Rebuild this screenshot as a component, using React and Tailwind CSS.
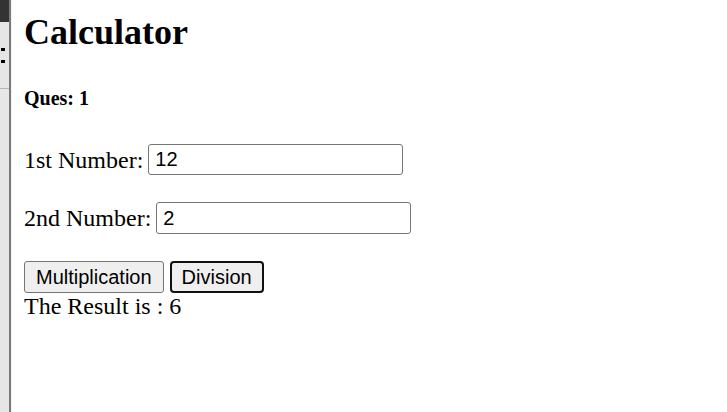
import { useState } from 'react'

const serif = { fontFamily: '"Liberation Serif", "Times New Roman", serif' }

export default function App() {
  const [a, setA] = useState('12')
  const [b, setB] = useState('2')
  const [result, setResult] = useState(6)

  return (
    <div className="flex min-h-[412px] w-[727px] bg-white text-black" style={serif}>

      {/* ── Bord gauche (fenêtre voisine) ─────────────── */}
      <div className="relative flex w-[12px] shrink-0 bg-[#e6e6e6]">
        <div className="absolute left-0 top-0 h-[22px] w-[9px] bg-[#333333]" />
        <div className="absolute left-[1px] top-[48px] h-[3px] w-[4px] bg-black" />
        <div className="absolute left-[1px] top-[60px] h-[3px] w-[4px] bg-black" />
        <div className="absolute left-0 top-[88px] h-px w-[9px] bg-[#b5b5b5]" />
        <div className="ml-[9px] w-[2px] bg-[#7a7a7a]" />
        <div className="w-px bg-[#f3f3f3]" />
      </div>

      {/* ── Contenu ──────────────────────────────────── */}
      <div className="flex flex-col pl-[12px]">
        <h2 className="mt-[12px] text-[36px] font-bold leading-[41px]">Calculator</h2>

        <h5 className="mt-[34px] text-[20px] font-bold leading-[23px]">Ques: 1</h5>

        <div className="mt-[34px] flex items-center gap-[5px] text-[24px] leading-[28px]">
          <span>1st Number:</span>
          <input
            value={a}
            onChange={e => setA(e.target.value)}
            className="h-[31px] w-[255px] rounded-[3px] border border-[#767676] px-[6px] text-[20px] outline-none"
            style={{ fontFamily: '"Liberation Sans", Arial, sans-serif' }}
          />
        </div>

        <div className="mt-[27px] flex items-center gap-[5px] text-[24px] leading-[28px]">
          <span>2nd Number:</span>
          <input
            value={b}
            onChange={e => setB(e.target.value)}
            className="h-[32px] w-[255px] rounded-[3px] border border-[#767676] px-[6px] text-[20px] outline-none"
            style={{ fontFamily: '"Liberation Sans", Arial, sans-serif' }}
          />
        </div>

        <div
          className="mt-[27px] flex gap-[6px] text-[20px]"
          style={{ fontFamily: '"Liberation Sans", Arial, sans-serif' }}
        >
          <button
            onClick={() => setResult(Number(a) * Number(b))}
            className="h-[32px] rounded-[3px] border border-[#767676] bg-[#efefef] px-[11px] leading-none"
          >
            Multiplication
          </button>
          <button
            onClick={() => setResult(Number(a) / Number(b))}
            className="h-[32px] rounded-[4px] border-2 border-[#101010] bg-[#efefef] px-[10px] leading-none"
          >
            Division
          </button>
        </div>

        <p className="text-[24px] leading-[26px]">The Result is : {result}</p>
      </div>
    </div>
  )
}
